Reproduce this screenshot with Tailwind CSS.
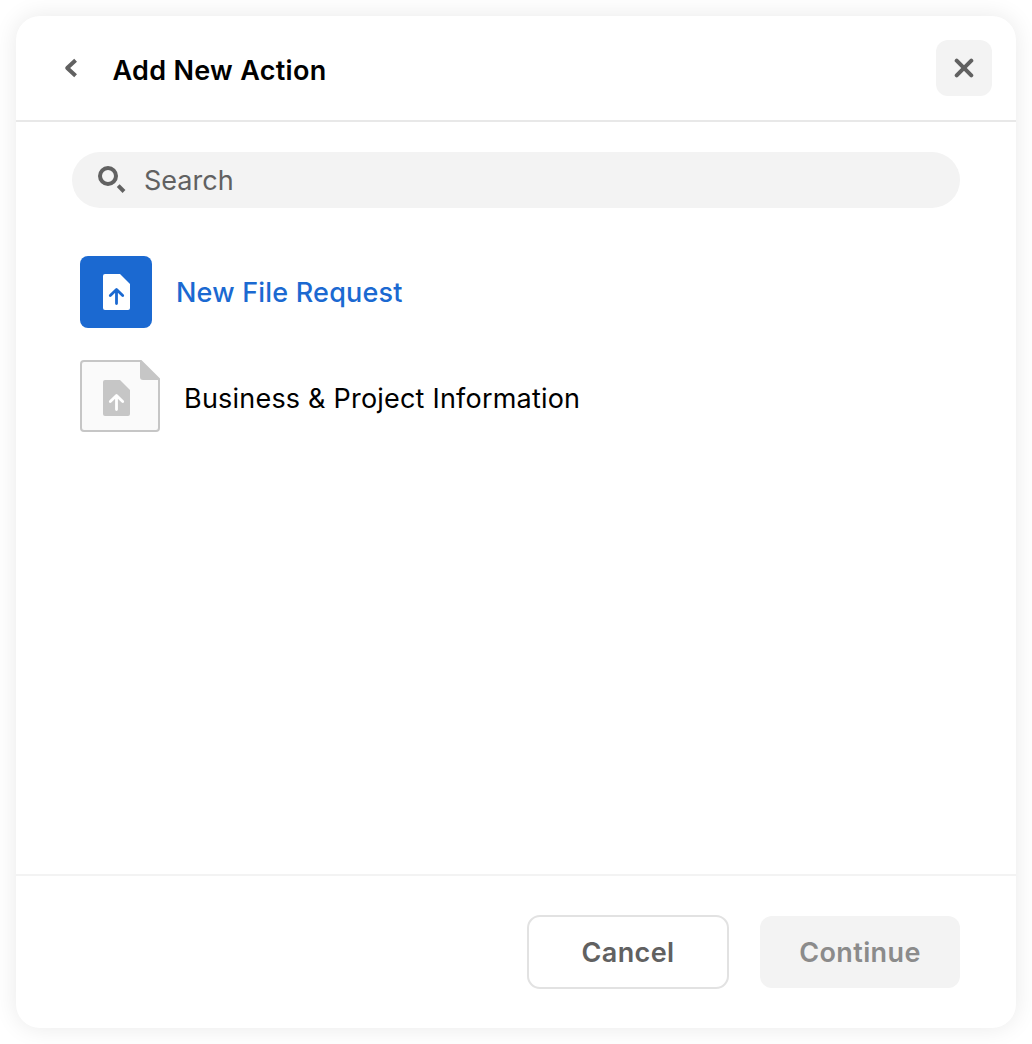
<!DOCTYPE html>
<html lang="en">
<head>
  <meta charset="UTF-8"/>
  <meta name="viewport" content="width=device-width, initial-scale=1.0"/>
  <title>Add New Action</title>
  <script src="https://cdn.jsdelivr.net/npm/@tailwindcss/browser@4"></script>
</head>
<body class="bg-white p-4 font-['Inter',sans-serif] text-[27px] leading-8 text-black">

  <!-- Dialog -->
  <div class="flex h-[1012px] w-[1000px] flex-col rounded-3xl bg-white shadow-[0_0_24px_rgba(0,0,0,0.09)]">

    <!-- Header -->
    <header class="flex h-[106px] items-center border-b-2 border-[#e8e8e8] pr-6 pl-12">
      <button class="mr-[34.5px]" aria-label="Back">
        <svg class="h-5 w-[14px]" viewBox="0 0 14 20" fill="none" stroke="#616161" stroke-width="4" stroke-linejoin="round">
          <path d="M11.6 2.2 3.2 10l8.4 7.8"/>
        </svg>
      </button>
      <h1 class="grow pt-[5px] font-semibold tracking-[0.3px]">Add New Action</h1>
      <button class="flex size-14 items-center justify-center rounded-xl bg-[#f3f3f3]" aria-label="Close">
        <svg class="size-5" viewBox="0 0 20 20" fill="none" stroke="#616161" stroke-width="4" stroke-linecap="round">
          <path d="M2.7 2.7l14.6 14.6M17.3 2.7 2.7 17.3"/>
        </svg>
      </button>
    </header>

    <!-- Search and list -->
    <main class="grow px-14 pt-[30px]">
      <label class="flex h-14 items-center rounded-full bg-[#f3f3f3] pl-6 text-[#616161]">
        <svg class="mr-[18px] size-[30px]" viewBox="0 0 30 30" fill="none" stroke="#616161">
          <circle cx="12" cy="11" r="8" stroke-width="4"/>
          <path d="M22.2 20.7l5.8 5.8" stroke-width="4"/>
        </svg>
        <span class="pt-0.5">Search</span>
      </label>

      <ul class="mt-12 flex flex-col gap-8 pl-2">
        <li class="flex h-[72px] items-center gap-6 text-[#1b69d1]">
          <span class="flex size-[72px] items-center justify-center rounded-lg bg-[#1b69d1]">
            <svg class="ml-px h-9 w-[27px]" viewBox="0 0 27 36" fill="none">
              <path d="M2 0h15l10 10v24a2 2 0 0 1-2 2H2a2 2 0 0 1-2-2V2a2 2 0 0 1 2-2z" fill="#fff"/>
              <path d="M13.5 29.5V16M7.3 21.6l6.2-6 6.2 6" stroke="#1b69d1" stroke-width="2.8" stroke-linecap="round" stroke-linejoin="round"/>
            </svg>
          </span>
          <span class="pt-0.5 font-medium tracking-[0.2px]">New File Request</span>
        </li>
        <li class="flex h-[72px] items-center gap-6">
          <svg class="h-[72px] w-20" viewBox="0 0 80 72" fill="none">
            <path d="M4 1h57l18 18v49a3 3 0 0 1-3 3H4a3 3 0 0 1-3-3V4a3 3 0 0 1 3-3z" fill="#fafafa" stroke="#c6c6c6" stroke-width="2"/>
            <path d="M60 0l20 20H63a3 3 0 0 1-3-3z" fill="#c6c6c6"/>
            <path d="M25 20h15l10 10v24a2 2 0 0 1-2 2H25a2 2 0 0 1-2-2V22a2 2 0 0 1 2-2z" fill="#c6c6c6"/>
            <path d="M36.5 49.5V36M30.3 41.6l6.2-6 6.2 6" stroke="#fff" stroke-width="2.8" stroke-linecap="round" stroke-linejoin="round"/>
          </svg>
          <span class="pt-1.5 tracking-[0.21px]">Business &amp; Project Information</span>
        </li>
      </ul>
    </main>

    <!-- Footer -->
    <footer class="flex h-[154px] justify-end gap-[31px] border-t-2 border-[#f3f3f3] pt-[39px] pr-14 font-semibold">
      <button class="h-[74px] w-[202px] rounded-[13px] border-2 border-[#e2e2e2] pt-0.5 tracking-[0.35px] text-[#616161]">Cancel</button>
      <button class="mt-px h-[72px] w-[200px] rounded-xl bg-[#f3f3f3] pt-0.5 tracking-[0.4px] text-[#8b8b8b]">Continue</button>
    </footer>
  </div>

</body>
</html>
